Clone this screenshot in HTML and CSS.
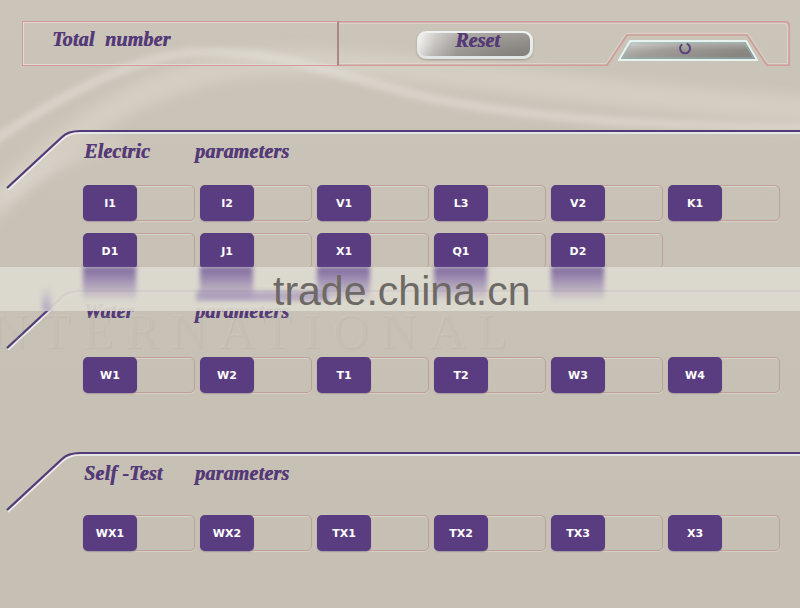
FILE: index.html
```html
<!DOCTYPE html>
<html lang="en">
<head>
<meta charset="utf-8">
<title>Parameters</title>
<link rel="stylesheet" href="styles.css">
</head>
<body>
<div class="page">
  <svg class="bg-swoosh" viewBox="0 0 800 608" width="800" height="608" aria-hidden="true">
    <defs>
      <filter id="soft" x="-10%" y="-50%" width="120%" height="200%"><feGaussianBlur stdDeviation="6"/></filter>
      <filter id="soft2" x="-10%" y="-50%" width="120%" height="200%"><feGaussianBlur stdDeviation="3"/></filter>
    </defs>
    <path d="M-30,230 C60,130 150,75 250,64 C380,52 520,92 820,110" fill="none" stroke="rgba(236,233,224,0.28)" stroke-width="26" filter="url(#soft)"/>
    <path d="M-20,150 C60,95 130,58 195,52 C280,48 350,80 430,98 C550,122 680,126 820,128" fill="none" stroke="rgba(240,238,230,0.42)" stroke-width="8" filter="url(#soft2)"/>
    <path d="M0,200 C40,170 80,150 120,142" fill="none" stroke="rgba(236,233,224,0.25)" stroke-width="14" filter="url(#soft)"/>
  </svg>

  <header class="topbar">
    <div class="total"><span class="title">Total&nbsp; number</span></div>
    <div class="controls">
      <svg class="controls-outline" viewBox="0 0 451 45" width="451" height="45" aria-hidden="true">
        <path d="M0,0.8 H446 Q450.2,0.8 450.2,5 V44.2 H428 L408,14 H288 L268,44.2 H0" fill="none" stroke="#cf9c98" stroke-width="1.6"/>
        <path d="M0,2.4 H445 Q448.6,2.4 448.6,6 V42.6 H429 L409,12.4 H287 L267,42.6 H0" fill="none" stroke="#e6d6d1" stroke-width="0.8"/>
      </svg>
      <button class="reset"><span class="reset-face">Reset</span></button>
      <svg class="glass" viewBox="0 0 140 21" width="140" height="21" aria-hidden="true">
        <defs>
          <linearGradient id="glassg" x1="0" y1="0" x2="1" y2="0.5">
            <stop offset="0" stop-color="#eeeeec"/>
            <stop offset="0.18" stop-color="#bab6b2"/>
            <stop offset="0.45" stop-color="#9f9b96"/>
            <stop offset="1" stop-color="#888480"/>
          </linearGradient>
          <linearGradient id="glassh" x1="0" y1="0" x2="0" y2="1">
            <stop offset="0" stop-color="#ffffff" stop-opacity="0.25"/>
            <stop offset="0.5" stop-color="#ffffff" stop-opacity="0"/>
          </linearGradient>
        </defs>
        <polygon points="12,1 128,1 139,20 1,20" fill="url(#glassg)" stroke="#e6f3f0" stroke-width="2"/>
        <polygon points="13,2 127,2 137,19 3,19" fill="url(#glassh)"/>
        <polygon points="13.5,3 126.5,3 135.5,18 4.5,18" fill="none" stroke="#8fbdb8" stroke-width="0.8"/>
        <path d="M64.2,4.2 A5,5 0 1 0 68.8,3.6" fill="none" stroke="#5b3f80" stroke-width="2"/>
      </svg>
    </div>
  </header>

  <section class="section sec-electric">
    <svg class="sec-line" viewBox="0 0 800 64" width="800" height="64" aria-hidden="true">
      <path d="M8,61 L63,10 Q69,4 81,4 H800" fill="none" stroke="#f1eff3" stroke-width="1.6"/>
      <path d="M7,59 L62,8 Q68,2 80,2 H800" fill="none" stroke="#523a7a" stroke-width="2.2"/>
    </svg>
    <h2 class="sec-head"><span class="sec-name">Electric</span><span>parameters</span></h2>
    <div class="grid">
      <div class="cell"><span class="label">I1</span></div>
      <div class="cell"><span class="label">I2</span></div>
      <div class="cell"><span class="label">V1</span></div>
      <div class="cell"><span class="label">L3</span></div>
      <div class="cell"><span class="label">V2</span></div>
      <div class="cell"><span class="label">K1</span></div>
      <div class="cell"><span class="label">D1</span></div>
      <div class="cell"><span class="label">J1</span></div>
      <div class="cell"><span class="label">X1</span></div>
      <div class="cell"><span class="label">Q1</span></div>
      <div class="cell"><span class="label">D2</span></div>
    </div>
  </section>

  <section class="section sec-water">
    <svg class="sec-line" viewBox="0 0 800 64" width="800" height="64" aria-hidden="true">
      <path d="M8,61 L63,10 Q69,4 81,4 H800" fill="none" stroke="#f1eff3" stroke-width="1.6"/>
      <path d="M7,59 L62,8 Q68,2 80,2 H800" fill="none" stroke="#523a7a" stroke-width="2.2"/>
    </svg>
    <h2 class="sec-head"><span class="sec-name">Water</span><span>parameters</span></h2>
    <div class="grid">
      <div class="cell"><span class="label">W1</span></div>
      <div class="cell"><span class="label">W2</span></div>
      <div class="cell"><span class="label">T1</span></div>
      <div class="cell"><span class="label">T2</span></div>
      <div class="cell"><span class="label">W3</span></div>
      <div class="cell"><span class="label">W4</span></div>
    </div>
  </section>

  <section class="section sec-self">
    <svg class="sec-line" viewBox="0 0 800 64" width="800" height="64" aria-hidden="true">
      <path d="M8,61 L63,10 Q69,4 81,4 H800" fill="none" stroke="#f1eff3" stroke-width="1.6"/>
      <path d="M7,59 L62,8 Q68,2 80,2 H800" fill="none" stroke="#523a7a" stroke-width="2.2"/>
    </svg>
    <h2 class="sec-head"><span class="sec-name">Self -Test</span><span>parameters</span></h2>
    <div class="grid">
      <div class="cell"><span class="label">WX1</span></div>
      <div class="cell"><span class="label">WX2</span></div>
      <div class="cell"><span class="label">TX1</span></div>
      <div class="cell"><span class="label">TX2</span></div>
      <div class="cell"><span class="label">TX3</span></div>
      <div class="cell"><span class="label">X3</span></div>
    </div>
  </section>

  <div class="wm-intl" aria-hidden="true">NTERNATIONAL</div>

  <div class="watermark">
    <div class="refl-row">
      <span class="refl"></span>
      <span class="refl"></span>
      <span class="refl"></span>
      <span class="refl"></span>
      <span class="refl"></span>
    </div>
    <span class="smear smear-a"></span>
    <span class="smear smear-b"></span>
    <span class="wm-text">trade.china.cn</span>
  </div>
</div>
</body>
</html>
```

FILE: styles.css
```css
html, body {
  margin: 0;
  padding: 0;
  background: #c8c1b6;
}

body {
  font-family: "Liberation Serif", "Times New Roman", serif;
}

.page {
  position: relative;
  width: 800px;
  height: 608px;
  overflow: hidden;
  background: linear-gradient(180deg, #cbc4b9 0%, #c8c1b6 40%, #c6bfb4 100%);
}

.bg-swoosh {
  position: absolute;
  left: 0;
  top: 0;
  z-index: 0;
  pointer-events: none;
}

/* ---------- top bar ---------- */
.topbar {
  position: relative;
  z-index: 1;
  display: flex;
  width: 768px;
  height: 45px;
  margin: 21px 0 0 22px;
}

.total {
  box-sizing: border-box;
  width: 317px;
  height: 45px;
  padding: 7px 0 0 29px;
  border: 1px solid #cf9c98;
  border-right: 2px solid #a98985;
  box-shadow: inset 1px 1px 0 #e6d6d1, inset 0 -1px 0 #e6d6d1;
}

.title {
  font: italic bold 20px/20px "Liberation Serif", "Times New Roman", serif;
  color: #553a78;
  text-shadow: 0.5px 0 0 #553a78;
  letter-spacing: 0.2px;
}

.controls {
  position: relative;
  flex: 1;
  display: flex;
  align-items: flex-start;
}

.controls-outline {
  position: absolute;
  left: 0;
  top: 0;
}

.reset {
  position: relative;
  display: flex;
  box-sizing: border-box;
  width: 116px;
  height: 28px;
  margin: 10px 0 0 78px;
  padding: 2px 3px 3px 2px;
  border: 0;
  border-radius: 9px;
  background: linear-gradient(180deg, #eef2f0 0%, #dfe5e2 100%);
  box-shadow: 0 1px 2px rgba(80, 70, 60, 0.35);
  cursor: pointer;
}

.reset-face {
  flex: 1;
  display: flex;
  justify-content: center;
  border-radius: 7px;
  background:
    linear-gradient(180deg, rgba(255,255,255,0.18) 0%, rgba(255,255,255,0.05) 45%, rgba(0,0,0,0.06) 100%),
    linear-gradient(100deg, #f1f1ef 0%, #c6c3bf 15%, #a19d98 36%, #908c87 70%, #88847f 100%);
  font: italic bold 20px/14px "Liberation Serif", "Times New Roman", serif;
  color: #553a78;
  text-shadow: 0.5px 0 0 #553a78;
  padding-left: 6px;
}

.glass {
  display: block;
  margin: 19px 0 0 85px;
}

/* ---------- sections ---------- */
.section {
  position: relative;
  z-index: 1;
  padding-left: 83px;
}

.sec-line {
  position: absolute;
  left: 0;
  top: -2px;
  overflow: visible;
}

.sec-head {
  position: relative;
  margin: 0;
  height: 20px;
  padding: 10px 0 0 1px;
  font: italic bold 20px/20px "Liberation Serif", "Times New Roman", serif;
  color: #553a78;
  text-shadow: 0.5px 0 0 #553a78;
  letter-spacing: 0.2px;
}

.sec-name {
  display: inline-block;
  width: 111px;
}

.grid {
  display: grid;
  grid-template-columns: repeat(6, 112px);
  column-gap: 5px;
  row-gap: 12px;
}

.sec-electric { margin-top: 65px; }
.sec-electric .grid { margin-top: 24px; }

.sec-water { margin-top: 22px; }
.sec-water .grid { margin-top: 36px; }

.sec-self { margin-top: 60px; }
.sec-self .grid { margin-top: 32px; }

.cell {
  display: flex;
  box-sizing: border-box;
  height: 36px;
  border: 1px solid #bf9f98;
  border-radius: 5px;
  box-shadow: inset 1px 1px 0 rgba(255, 255, 255, 0.3), 0 1px 0 rgba(255, 255, 255, 0.25);
}

.label {
  display: flex;
  align-items: center;
  justify-content: center;
  width: 54px;
  margin: -1px 0 -1px -1px;
  border-radius: 5px;
  background: #5a3d80;
  box-shadow: 0 1px 1px rgba(50, 30, 70, 0.3);
  color: #ffffff;
  font: bold 11px/1 "DejaVu Sans", "Liberation Sans", sans-serif;
}

/* ---------- watermark overlays ---------- */
.wm-intl {
  position: absolute;
  left: -8px;
  top: 306px;
  z-index: 2;
  font: 50px/50px "Liberation Serif", serif;
  letter-spacing: 12px;
  color: rgba(255, 255, 255, 0.07);
  text-shadow: 1px 1px 0 rgba(120, 108, 96, 0.07);
  pointer-events: none;
}

.watermark {
  position: absolute;
  left: 0;
  top: 267px;
  z-index: 3;
  width: 800px;
  height: 44px;
  background: rgba(221, 217, 208, 0.93);
  pointer-events: none;
}

.refl-row {
  display: flex;
  gap: 64px;
  padding-left: 83px;
}

.refl {
  display: block;
  width: 53px;
  height: 34px;
  background: linear-gradient(180deg, rgba(100, 74, 145, 0.78) 0%, rgba(125, 100, 165, 0.5) 50%, rgba(160, 140, 190, 0) 100%);
  filter: blur(2px);
}

.smear {
  position: absolute;
  display: block;
  filter: blur(2px);
}

.smear-a {
  left: 42px;
  top: 20px;
  width: 9px;
  height: 24px;
  background: linear-gradient(180deg, rgba(140, 120, 180, 0) 0%, rgba(140, 120, 180, 0.5) 100%);
}

.smear-b {
  left: 196px;
  top: 24px;
  width: 132px;
  height: 10px;
  background: rgba(140, 118, 178, 0.45);
}

.wm-text {
  position: absolute;
  left: 273px;
  top: 4px;
  font: 41px/41px "Liberation Sans", Arial, sans-serif;
  color: #6d6964;
}
```
